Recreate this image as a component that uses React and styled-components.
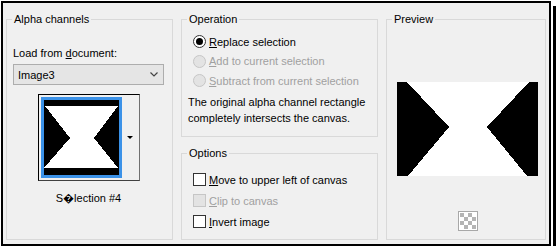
import styled, { createGlobalStyle } from 'styled-components'

const Global = createGlobalStyle`
  body {
    margin: 0;
    background: #fff;
    font-family: "Liberation Sans", Arial, sans-serif;
    font-size: 11px;
    color: #000;
  }
`

const Frame = styled.div`
  box-sizing: border-box;
  margin: 1px 0 0 1px;
  width: 550px;
  height: 245px;
  border: 2px solid #000;
  background: #f0f0f0;
  box-shadow: 2px 2px 0 0 #fff, 5px 5px 0 0 #000;
  display: flex;
  gap: 8px;
  padding: 9px 3px 4px 3px;
`

const Group = styled.fieldset`
  box-sizing: border-box;
  margin: 0;
  border: 1px solid #d9d9d9;
  padding: ${p => p.$pad || '0 8px 0 6px'};
  width: ${p => p.$w || 'auto'};
  height: ${p => p.$h || 'auto'};
  flex: ${p => p.$grow ? 1 : 'none'};
  min-width: 0;
  display: flex;
  flex-direction: column;
  align-items: ${p => p.$center ? 'center' : 'stretch'};
`

const Legend = styled.legend`
  padding: 0 2px;
  margin-left: ${p => p.$ml || '0'};
  line-height: 14px;
`

const Column = styled.div`
  display: flex;
  flex-direction: column;
  gap: 9px;
  width: 197px;
`

const Label = styled.div`
  line-height: 14px;
  margin-top: ${p => p.$mt || '0'};
`

const Select = styled.div`
  box-sizing: border-box;
  margin-top: 4px;
  height: 21px;
  width: 151px;
  background: #e5e5e5;
  border: 1px solid #adadad;
  display: flex;
  align-items: center;
  justify-content: space-between;
  padding: 0 5px 0 4px;
`

const Thumb = styled.div`
  align-self: center;
  margin-top: 9px;
  display: flex;
  border: 1px solid #000;
  border-right-color: #707070;
  border-bottom-color: #404040;
  padding: 2px 0 2px 2px;
`

const ThumbImage = styled.div`
  border: 3px solid #3b92e8;
  width: 75px;
  height: 75px;
  background: #000;
`

const DropPart = styled.div`
  width: 17px;
  display: flex;
  align-items: center;
  justify-content: center;
  &::after {
    content: '';
    border-left: 3px solid transparent;
    border-right: 3px solid transparent;
    border-top: 3px solid #000;
  }
`

const Caption = styled.div`
  align-self: center;
  margin-top: 10px;
  line-height: 14px;
`

const Row = styled.div`
  display: flex;
  align-items: center;
  gap: 3px;
  height: ${p => p.$h || '20px'};
  color: ${p => p.$disabled ? '#a0a0a0' : '#000'};
`

const Radio = styled.span`
  box-sizing: border-box;
  width: 13px;
  height: 13px;
  border-radius: 50%;
  border: 1px solid ${p => p.$disabled ? '#c6c6c6' : '#333'};
  background: ${p => p.$disabled ? '#e3e3e3' : '#fff'};
  display: flex;
  align-items: center;
  justify-content: center;
  &::after {
    content: '';
    display: ${p => p.$checked ? 'block' : 'none'};
    width: 7px;
    height: 7px;
    border-radius: 50%;
    background: #000;
  }
`

const Check = styled.span`
  box-sizing: border-box;
  width: 13px;
  height: 13px;
  border: 1px solid ${p => p.$disabled ? '#c6c6c6' : '#333'};
  background: ${p => p.$disabled ? '#e3e3e3' : '#fff'};
`

const Note = styled.div`
  margin-top: 3px;
  line-height: 16px;
`

const Preview = styled.div`
  margin-top: 56px;
  width: 141px;
  height: 94px;
  margin-left: 3px;
`

const Checker = styled.div`
  margin-top: 35px;
  margin-left: 3px;
  width: 20px;
  height: 20px;
`

function Key ({ children }) {
  return <u>{children}</u>
}

function Hourglass ({ w, h, points }) {
  return (
    <svg width={w} height={h} viewBox={`0 0 ${w} ${h}`} style={{ display: 'block' }} shapeRendering="crispEdges">
      <rect width={w} height={h} fill="#000" />
      <polygon points={points} fill="#fff" />
    </svg>
  )
}

export default function App () {
  return (
    <>
      <Global />
      <Frame>
        <Group $w="167px" $pad="0 8px 0 6px">
          <Legend $ml="-1px">Alpha channels</Legend>
          <Label $mt="20px">Load from <Key>d</Key>ocument:</Label>
          <Select>
            <span>Image3</span>
            <svg width="8" height="5" viewBox="0 0 8 5">
              <polyline points="0.5,0.5 4,4 7.5,0.5" fill="none" stroke="#444" strokeWidth="1.2" />
            </svg>
          </Select>
          <Thumb>
            <ThumbImage>
              <Hourglass w={75} h={75} points="1,6 74,6 50,38 74,68 0,68 26,38" />
            </ThumbImage>
            <DropPart />
          </Thumb>
          <Caption>{'S\uFFFDlection #4'}</Caption>
        </Group>

        <Column>
          <Group $h="125px" $pad="6px 6px 0 11px">
            <Legend $ml="-6px">Operation</Legend>
            <Row $h="19.5px"><Radio $checked /><span><Key>R</Key>eplace selection</span></Row>
            <Row $h="19.5px" $disabled><Radio $disabled /><span><Key>A</Key>dd to current selection</span></Row>
            <Row $h="19.5px" $disabled><Radio $disabled /><span><Key>S</Key>ubtract from current selection</span></Row>
            <Note style={{ marginLeft: '-5px' }}>
              The original alpha channel rectangle<br />completely intersects the canvas.
            </Note>
          </Group>
          <Group $grow $pad="9px 6px 0 11px">
            <Legend $ml="-6px">Options</Legend>
            <Row $h="21px"><Check /><span><Key>M</Key>ove to upper left of canvas</span></Row>
            <Row $h="21px" $disabled><Check $disabled /><span><Key>C</Key>lip to canvas</span></Row>
            <Row $h="21px"><Check /><span><Key>I</Key>nvert image</span></Row>
          </Group>
        </Column>

        <Group $grow $center $pad="0 6px 0 6px">
          <Legend $ml="-1px" style={{ alignSelf: 'flex-start' }}>Preview</Legend>
          <Preview>
            <Hourglass w={141} h={94} points="10,0 132,0 90,45 130,94 11,94 52,45" />
          </Preview>
          <Checker>
            <svg width="20" height="20" viewBox="0 0 20 20" shapeRendering="crispEdges">
              <rect x="0.5" y="0.5" width="19" height="19" fill="#fff" stroke="#a8a8a8" />
              {[0, 1, 2, 3].map(r => [0, 1, 2, 3].map(c => (r + c) % 2 === 0 &&
                <rect key={`${r}${c}`} x={2 + c * 4} y={2 + r * 4} width="4" height="4" fill="#b4b4b4" />))}
            </svg>
          </Checker>
        </Group>
      </Frame>
    </>
  )
}
